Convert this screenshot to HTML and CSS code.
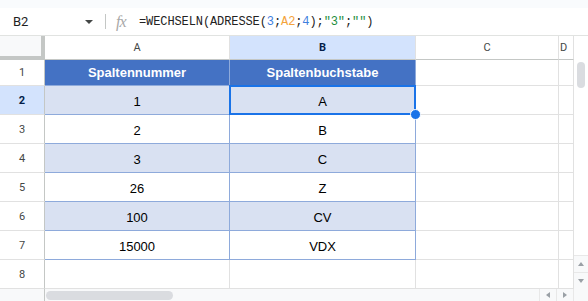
FILE: index.html
```html
<!DOCTYPE html>
<html lang="de">
<head>
    <meta charset="UTF-8">
    <meta name="viewport" content="width=device-width, initial-scale=1.0">
    <title>WECHSELN ADRESSE</title>
    <link rel="stylesheet" href="styles.css">
</head>
<body>
    <div class="top-strip"></div>
    <div class="formula-bar">
        <div class="name-box">B2</div>
        <div class="name-arrow"></div>
        <div class="divider"></div>
        <div class="fx">fx</div>
        <div class="formula">=WECHSELN(ADRESSE(<span class="num">3</span>;<span class="ref">A2</span>;<span class="num">4</span>);<span class="str">"3"</span>;<span class="str">""</span>)</div>
    </div>

    <div class="sheet">
        <div class="grid">
            <!-- column headers -->
            <div class="corner"></div>
            <div class="col-head">A</div>
            <div class="col-head active">B</div>
            <div class="col-head">C</div>
            <div class="col-head cut">D</div>

            <!-- row 1 -->
            <div class="row-head">1</div>
            <div class="cell t th">Spaltennummer</div>
            <div class="cell t th">Spaltenbuchstabe</div>
            <div class="cell"></div>
            <div class="cell"></div>

            <!-- row 2 -->
            <div class="row-head active">2</div>
            <div class="cell t band">1</div>
            <div class="cell t band selected">A<span class="handle"></span></div>
            <div class="cell"></div>
            <div class="cell"></div>

            <!-- row 3 -->
            <div class="row-head">3</div>
            <div class="cell t">2</div>
            <div class="cell t">B</div>
            <div class="cell"></div>
            <div class="cell"></div>

            <!-- row 4 -->
            <div class="row-head">4</div>
            <div class="cell t band">3</div>
            <div class="cell t band">C</div>
            <div class="cell"></div>
            <div class="cell"></div>

            <!-- row 5 -->
            <div class="row-head">5</div>
            <div class="cell t">26</div>
            <div class="cell t">Z</div>
            <div class="cell"></div>
            <div class="cell"></div>

            <!-- row 6 -->
            <div class="row-head">6</div>
            <div class="cell t band">100</div>
            <div class="cell t band">CV</div>
            <div class="cell"></div>
            <div class="cell"></div>

            <!-- row 7 -->
            <div class="row-head">7</div>
            <div class="cell t">15000</div>
            <div class="cell t">VDX</div>
            <div class="cell"></div>
            <div class="cell"></div>

            <!-- row 8 -->
            <div class="row-head">8</div>
            <div class="cell"></div>
            <div class="cell"></div>
            <div class="cell"></div>
            <div class="cell"></div>
        </div>
        <div class="vscroll">
            <div class="vtrack"><div class="vthumb"></div></div>
            <div class="vbtn"><span class="tri up"></span></div>
            <div class="vbtn"><span class="tri down"></span></div>
        </div>
    </div>

    <div class="hscroll">
        <div class="hscroll-head"></div>
        <div class="htrack"><div class="hthumb"></div></div>
        <div class="hbtn"><span class="tri left"></span></div>
        <div class="hbtn"><span class="tri right"></span></div>
        <div class="hcorner"></div>
    </div>
</body>
</html>
```

FILE: styles.css
```css
body {
    margin: 0;
    width: 588px;
    height: 301px;
    overflow: hidden;
    background: #fff;
    font-family: "Liberation Sans", Arial, sans-serif;
    color: #000;
}
.top-strip {
    height: 8px;
    background: #f9fbfd;
}
.formula-bar {
    height: 27px;
    display: flex;
    align-items: center;
    border-bottom: 1px solid #e1e3e1;
    background: #fff;
}
.name-box {
    width: 70px;
    padding-left: 13px;
    font-family: Roboto, "Liberation Sans", sans-serif;
    font-size: 13px;
    color: #1f1f1f;
}
.name-arrow {
    width: 0;
    height: 0;
    border-left: 4px solid transparent;
    border-right: 4px solid transparent;
    border-top: 4px solid #444746;
    margin-left: 2px;
}
.divider {
    width: 1px;
    height: 15px;
    background: #c4c7c5;
    margin-left: 12px;
}
.fx {
    margin-left: 10px;
    width: 22px;
    font-family: "Liberation Serif", serif;
    font-style: italic;
    font-size: 16px;
    color: #a8a8a8;
    letter-spacing: -1px;
}
.formula {
    margin-left: 1px;
    font-family: "Liberation Mono", monospace;
    font-size: 12px;
    letter-spacing: -0.1px;
    color: #222;
}
.formula .num { color: #3f7fde; }
.formula .ref { color: #f4a33b; }
.formula .str { color: #1e8e3e; }

.sheet {
    display: flex;
    height: 253px;
}
.grid {
    display: grid;
    grid-template-columns: 45px 185px 186px 143px 15px;
    grid-template-rows: 24px 26px repeat(7, 29px);
}
.grid > div {
    box-sizing: border-box;
    border-right: 1px solid #e1e1e1;
    border-bottom: 1px solid #e1e1e1;
}
.corner {
    background: #f8f9fa;
    border-right: 4px solid #c4c7c5 !important;
    border-bottom: 4px solid #c4c7c5 !important;
}
.col-head {
    display: flex;
    align-items: center;
    justify-content: center;
    font-family: Roboto, "Liberation Sans", sans-serif;
    font-size: 11px;
    color: #444746;
    border-bottom-color: #c4c7c5 !important;
}
.col-head.active {
    background: #d3e3fd;
    font-weight: bold;
    color: #041e49;
}
.col-head.cut {
    justify-content: flex-start;
    padding-left: 1px;
}
.row-head {
    display: flex;
    align-items: center;
    justify-content: center;
    font-family: Roboto, "Liberation Sans", sans-serif;
    font-size: 11px;
    color: #444746;
    border-right-color: #c4c7c5 !important;
}
.row-head.active {
    background: #d3e3fd;
    color: #041e49;
    font-weight: bold;
}
.cell {
    display: flex;
    align-items: flex-end;
    justify-content: center;
    padding-bottom: 5px;
    font-size: 13px;
    line-height: 15px;
    position: relative;
}
.cell.t {
    border-right-color: #8eaadb !important;
    border-bottom-color: #8eaadb !important;
}
.cell.th {
    background: #4472c4;
    color: #fff;
    font-weight: bold;
    align-items: center;
    padding-bottom: 0;
}
.cell.band {
    background: #d9e1f2;
}
.selected::after {
    content: "";
    position: absolute;
    top: -1px;
    left: -1px;
    right: -1px;
    bottom: -1px;
    border: 2px solid #1a73e8;
}
.handle {
    position: absolute;
    right: -6px;
    bottom: -6px;
    width: 9px;
    height: 9px;
    border-radius: 50%;
    background: #1a73e8;
    border: 1px solid #fff;
    z-index: 2;
}

.vscroll {
    width: 14px;
    display: flex;
    flex-direction: column;
    background: #fff;
}
.vtrack {
    flex: 1;
    padding-top: 26px;
    display: flex;
    justify-content: center;
}
.vthumb {
    width: 8px;
    height: 26px;
    border-radius: 4px;
    background: #dadce0;
}
.vbtn {
    height: 16px;
    display: flex;
    align-items: center;
    justify-content: center;
    border-top: 1px solid #e8e8e8;
    background: #f8f9fa;
}
.hscroll {
    display: flex;
    height: 12px;
    background: #f8f9fa;
}
.hscroll-head {
    width: 44px;
    border-right: 1px solid #c4c7c5;
}
.htrack {
    width: 495px;
    padding: 2px 0 0 1px;
}
.hthumb {
    width: 127px;
    height: 9px;
    border-radius: 5px;
    background: #dadce0;
}
.hbtn {
    width: 16px;
    display: flex;
    align-items: center;
    justify-content: center;
    border-left: 1px solid #e8e8e8;
}
.hcorner {
    width: 14px;
    border-left: 1px solid #e8e8e8;
}
.tri {
    width: 0;
    height: 0;
}
.tri.up {
    border-left: 3px solid transparent;
    border-right: 3px solid transparent;
    border-bottom: 4px solid #9aa0a6;
}
.tri.down {
    border-left: 3px solid transparent;
    border-right: 3px solid transparent;
    border-top: 4px solid #9aa0a6;
}
.tri.left {
    border-top: 3px solid transparent;
    border-bottom: 3px solid transparent;
    border-right: 4px solid #9aa0a6;
}
.tri.right {
    border-top: 3px solid transparent;
    border-bottom: 3px solid transparent;
    border-left: 4px solid #9aa0a6;
}
```
